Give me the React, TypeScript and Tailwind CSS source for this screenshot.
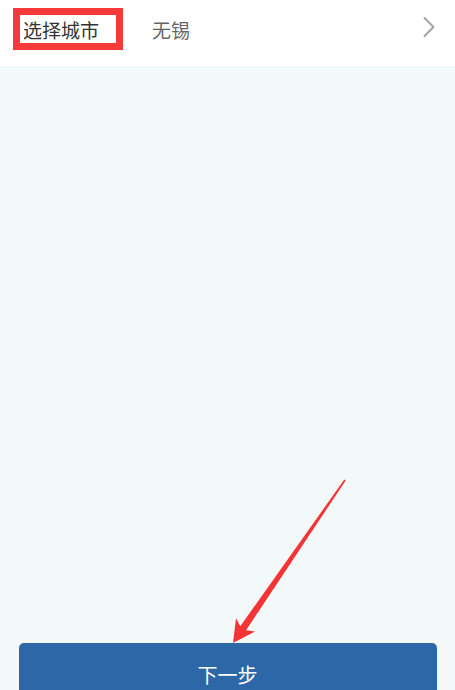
import { ChevronRight } from 'lucide-react'

const FONT = { fontFamily: '"Noto Sans CJK SC", "Noto Sans", sans-serif' }

export default function App() {
  return (
    <div className="relative w-[455px] h-[690px] overflow-hidden bg-[#f3f8f8]" style={FONT}>
      {/* 顶部城市选择 */}
      <div className="h-[66px] pb-[8px] bg-white flex items-center">
        <div className="ml-[13px] w-[110px] h-[42px] border-[7px] border-[#f63a3a] bg-white flex items-center pl-[3px]">
          <span className="text-[19px] leading-none text-[#333333]">选择城市</span>
        </div>
        <span className="ml-[29px] text-[19px] leading-none text-[#666666]">无锡</span>
        <ChevronRight size={36} strokeWidth={1.3} className="ml-auto mr-[8px] -mt-[4px] text-[#a3a3a3]" />
      </div>

      <div className="h-[577px]" />

      <div className="flex justify-center">
        <button className="w-[418px] h-[62px] rounded-t-[5px] bg-[#2c68a8] text-white text-[20px] leading-none pt-[1px]">
          下一步
        </button>
      </div>

      {/* 标注箭头 */}
      <svg className="absolute inset-0 pointer-events-none" width="455" height="690" viewBox="0 0 455 690">
        <polygon
          points="345.7,480.5 246.1,630.2 255,631.6 233,643 236,618.3 240.3,626.2 344.3,479.5"
          fill="#f53535"
        />
      </svg>
    </div>
  )
}
